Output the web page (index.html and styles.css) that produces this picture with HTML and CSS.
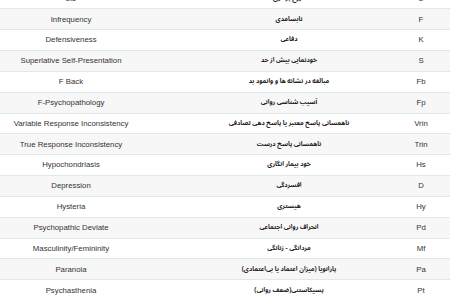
FILE: index.html
```html
<!DOCTYPE html>
<html lang="fa">
<head>
<meta charset="utf-8">
<title>MMPI scales</title>
<link rel="stylesheet" href="styles.css">
</head>
<body>
<div class="viewport">
<table class="scales">
  <colgroup>
    <col class="c-en"><col class="c-fa"><col class="c-ab">
  </colgroup>
  <tbody>
    <tr><td class="en">Lie</td><td class="fa">دروغ پردازی</td><td class="ab">L</td></tr>
    <tr><td class="en">Infrequency</td><td class="fa">نابسامدی</td><td class="ab">F</td></tr>
    <tr><td class="en">Defensiveness</td><td class="fa">دفاعی</td><td class="ab">K</td></tr>
    <tr><td class="en">Superlative Self-Presentation</td><td class="fa">خودنمایی بیش از حد</td><td class="ab">S</td></tr>
    <tr><td class="en">F Back</td><td class="fa">مبالغه در نشانه ها و وانمود بد</td><td class="ab">Fb</td></tr>
    <tr><td class="en">F-Psychopathology</td><td class="fa">آسیب شناسی روانی</td><td class="ab">Fp</td></tr>
    <tr><td class="en">Variable Response Inconsistency</td><td class="fa">ناهمسانی پاسخ معتبر یا پاسخ دهی تصادفی</td><td class="ab">Vrin</td></tr>
    <tr><td class="en">True Response Inconsistency</td><td class="fa">ناهمسانی پاسخ درست</td><td class="ab">Trin</td></tr>
    <tr><td class="en">Hypochondriasis</td><td class="fa">خود بیمار انگاری</td><td class="ab">Hs</td></tr>
    <tr><td class="en">Depression</td><td class="fa">افسردگی</td><td class="ab">D</td></tr>
    <tr><td class="en">Hysteria</td><td class="fa">هیستری</td><td class="ab">Hy</td></tr>
    <tr><td class="en">Psychopathic Deviate</td><td class="fa">انحراف روانی اجتماعی</td><td class="ab">Pd</td></tr>
    <tr><td class="en">Masculinity/Femininity</td><td class="fa">مردانگی - زنانگی</td><td class="ab">Mf</td></tr>
    <tr><td class="en">Paranoia</td><td class="fa">پارانویا (میزان اعتماد یا بی‌اعتمادی)</td><td class="ab">Pa</td></tr>
    <tr><td class="en">Psychasthenia</td><td class="fa">پسیکاستنی(ضعف روانی)</td><td class="ab">Pt</td></tr>
  </tbody>
</table>
</div>
</body>
</html>
```

FILE: styles.css
```css
html, body {
  margin: 0;
  padding: 0;
  background: #ffffff;
}
body {
  width: 450px;
  height: 300px;
  overflow: hidden;
  font-family: "Liberation Sans", Arial, sans-serif;
  color: #333333;
}
.viewport {
  margin-top: -12.55px;
  margin-left: -80.5px;
  width: 567px;
}
.scales {
  width: 567px;
  border-collapse: collapse;
  table-layout: fixed;
}
.c-en { width: 303px; }
.c-fa { width: 133px; }
.c-ab { width: 131px; }
.scales td {
  border-top: 1px solid #dcebe7;
  padding: 4.25px 4.5px;
  font-size: 7.8px;
  line-height: 11.35px;
  text-align: center;
  vertical-align: middle;
  white-space: nowrap;
}
.scales tr:nth-child(even) td {
  background: #f7f7f7;
}
.scales td.fa {
  direction: rtl;
  font-family: "Noto Sans Arabic", "Noto Naskh Arabic", "DejaVu Sans", sans-serif;
  font-size: 6.3px;
  font-weight: bold;
  color: #222222;
}
```
